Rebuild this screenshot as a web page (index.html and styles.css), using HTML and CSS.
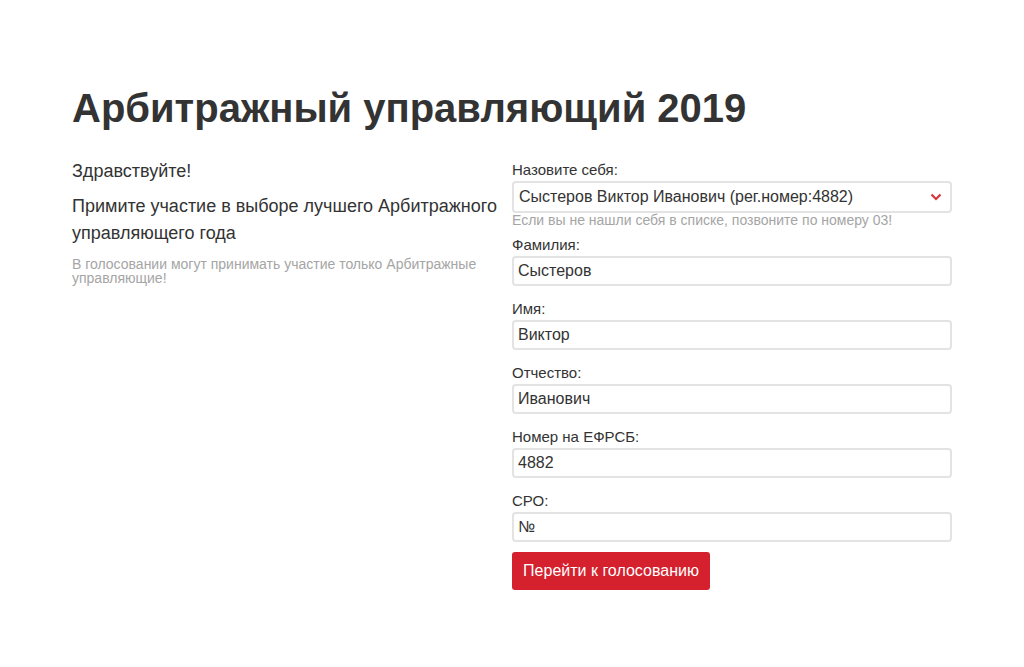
FILE: index.html
```html
<!DOCTYPE html>
<html lang="ru">
<head>
<meta charset="utf-8">
<title>Арбитражный управляющий 2019</title>
<link rel="stylesheet" href="styles.css">
</head>
<body>
<div class="page">
  <h1 class="title">Арбитражный управляющий 2019</h1>
  <div class="row">
    <div class="intro">
      <p class="hello">Здравствуйте!</p>
      <p class="lead">Примите участие в выборе лучшего Арбитражного управляющего года</p>
      <p class="note">В голосовании могут принимать участие только Арбитражные управляющие!</p>
    </div>
    <form class="form">
      <div class="group first">
        <label class="label">Назовите себя:</label>
        <div class="select">
          <span class="select-text">Сыстеров Виктор Иванович (рег.номер:4882)</span>
          <svg class="chev" width="12" height="8" viewBox="0 0 12 8"><path d="M1.5 1.5 L6 6 L10.5 1.5" fill="none" stroke="#d9343b" stroke-width="2.2"/></svg>
        </div>
        <div class="help">Если вы не нашли себя в списке, позвоните по номеру 03!</div>
      </div>
      <div class="group tight">
        <label class="label">Фамилия:</label>
        <div class="input">Сыстеров</div>
      </div>
      <div class="group">
        <label class="label">Имя:</label>
        <div class="input">Виктор</div>
      </div>
      <div class="group">
        <label class="label">Отчество:</label>
        <div class="input">Иванович</div>
      </div>
      <div class="group">
        <label class="label">Номер на ЕФРСБ:</label>
        <div class="input">4882</div>
      </div>
      <div class="group">
        <label class="label">СРО:</label>
        <div class="input">№</div>
      </div>
      <button type="button" class="btn">Перейти к голосованию</button>
    </form>
  </div>
</div>
</body>
</html>
```

FILE: styles.css
```css
html, body {
  margin: 0;
  padding: 0;
  background: #fff;
}
body {
  font-family: "Liberation Sans", Arial, sans-serif;
  color: #333;
}
.page {
  padding: 82px 0 0 72px;
  width: 880px;
}
.title {
  margin: 0;
  font-size: 40px;
  line-height: 52px;
  font-weight: bold;
  color: #333;
}
.row {
  display: flex;
  gap: 10px;
  margin-top: 25px;
}
.intro {
  width: 430px;
}
.hello {
  margin: 0;
  font-size: 18px;
  line-height: 24px;
}
.lead {
  margin: 10px 0 0;
  font-size: 18px;
  line-height: 27px;
}
.note {
  margin: 10px 0 0;
  font-size: 14px;
  line-height: 14px;
  color: #a5a5a5;
}
.form {
  width: 440px;
  margin: 1px 0 0;
}
.group {
  margin-top: 13px;
}
.group.first {
  margin-top: 0;
}
.group.tight {
  margin-top: 8px;
}
.label {
  display: block;
  font-size: 15px;
  line-height: 20px;
  margin-bottom: 1px;
  color: #333;
}
.input, .select {
  box-sizing: border-box;
  height: 30px;
  border: 2px solid #e3e3e3;
  border-radius: 4px;
  padding: 0 4px;
  font-size: 16px;
  line-height: 26px;
  color: #333;
}
.select {
  height: 32px;
  line-height: 28px;
  padding: 0 5px;
  display: flex;
  justify-content: space-between;
  align-items: center;
}
.chev {
  margin-right: 3px;
}
.help {
  font-size: 14px;
  line-height: 14px;
  color: #a5a5a5;
}
.btn {
  display: block;
  margin-top: 10px;
  height: 38px;
  width: 198px;
  padding: 0;
  border: none;
  border-radius: 3px;
  background: #d5202e;
  color: #fff;
  font-family: "Liberation Sans", Arial, sans-serif;
  font-size: 16px;
}
```
